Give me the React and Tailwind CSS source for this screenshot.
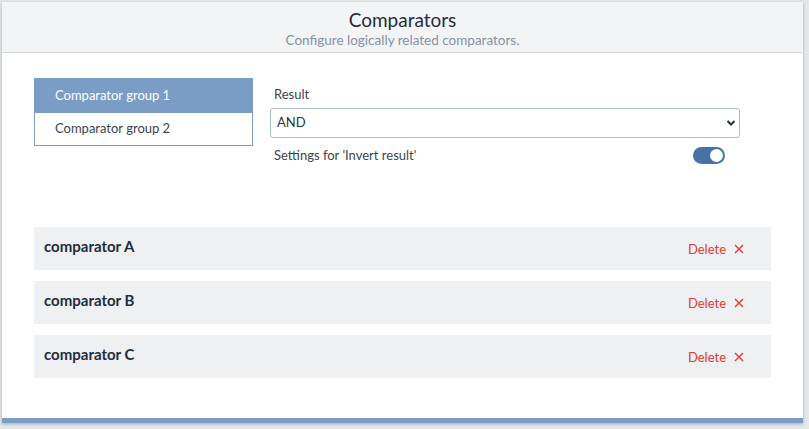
import React, { useState } from "react";

const groups = ["Comparator group 1", "Comparator group 2"];
const comparators = ["comparator A", "comparator B", "comparator C"];

export default function App() {
  const [active, setActive] = useState(0);
  const [invert, setInvert] = useState(true);

  return (
    <div className="w-[809px] h-[429px] bg-[#e4e7ea] pt-[2px] pl-[2px] overflow-hidden" style={{ fontFamily: "Lato, 'Noto Sans', sans-serif" }}>
      <div className="w-[801px] h-[421px] bg-white flex flex-col shadow-[0_1px_3px_rgba(0,0,0,0.25)]">
        {/* Header */}
        <div className="h-[51px] bg-[#f3f4f6] border-b border-[#d6d9dd] flex flex-col items-center pt-[5px]">
          <h1 className="text-[19px] leading-[25px] text-[#1f2d3d]">Comparators</h1>
          <p className="text-[13.5px] leading-[16px] text-[#8592a3]">Configure logically related comparators.</p>
        </div>

        {/* Body */}
        <div className="flex-1 px-8 pt-[25px]">
          <div className="flex gap-[17px]">
            <div className="w-[219px] h-[68px] border border-[#7b9cc4] flex flex-col">
              {groups.map((g, i) => (
                <button
                  key={g}
                  onClick={() => setActive(i)}
                  className={`h-[33px] text-left px-5 text-[13px] ${active === i ? "bg-[#7b9cc4] text-white" : "bg-white text-[#3b4450]"} ${i === 1 ? "border-t border-[#7b9cc4]" : ""}`}
                >
                  {g}
                </button>
              ))}
            </div>

            <div className="w-[470px] flex flex-col pt-[8px]">
              <label className="text-[13px] leading-[16px] text-[#3b4450] pl-1">Result</label>
              <div className="relative mt-[6px]">
                <select className="w-full h-[30px] border border-[#a7bcd6] rounded-[3px] px-[6px] text-[13px] text-[#2b3440] bg-white appearance-none">
                  <option>AND</option>
                  <option>OR</option>
                </select>
                <svg className="absolute right-[4px] top-[11px]" width="10" height="8" viewBox="0 0 10 8">
                  <path d="M1.5 2 L5 5.5 L8.5 2" fill="none" stroke="#243447" strokeWidth="2" />
                </svg>
              </div>
              <div className="flex items-center justify-between mt-[8px] pl-1 pr-[15px]">
                <span className="text-[13px] text-[#3b4450]">Settings for 'Invert result'</span>
                <button
                  onClick={() => setInvert(!invert)}
                  className={`w-[32px] h-[17px] rounded-full flex items-center px-[2px] ${invert ? "bg-[#4673a6] justify-end" : "bg-[#c6ccd4] justify-start"}`}
                >
                  <span className="w-[13px] h-[13px] rounded-full bg-white block" />
                </button>
              </div>
            </div>
          </div>

          <div className="mt-[61px] flex flex-col gap-[11px]">
            {comparators.map((c) => (
              <div key={c} className="h-[43px] bg-[#eff0f2] flex items-start justify-between pl-[10px] pr-[27px] pt-[8px]">
                <span className="text-[15px] font-bold text-[#1f2d3d]">{c}</span>
                <button className="flex items-center gap-[8px] text-[13px] text-[#e53935] mt-[5px]">
                  Delete
                  <svg width="10" height="10" viewBox="0 0 10 10">
                    <path d="M1 1 L9 9 M9 1 L1 9" stroke="#e53935" strokeWidth="1.4" />
                  </svg>
                </button>
              </div>
            ))}
          </div>
        </div>

        <div className="h-[5px] bg-[#7b9cc4]" />
      </div>
    </div>
  );
}
